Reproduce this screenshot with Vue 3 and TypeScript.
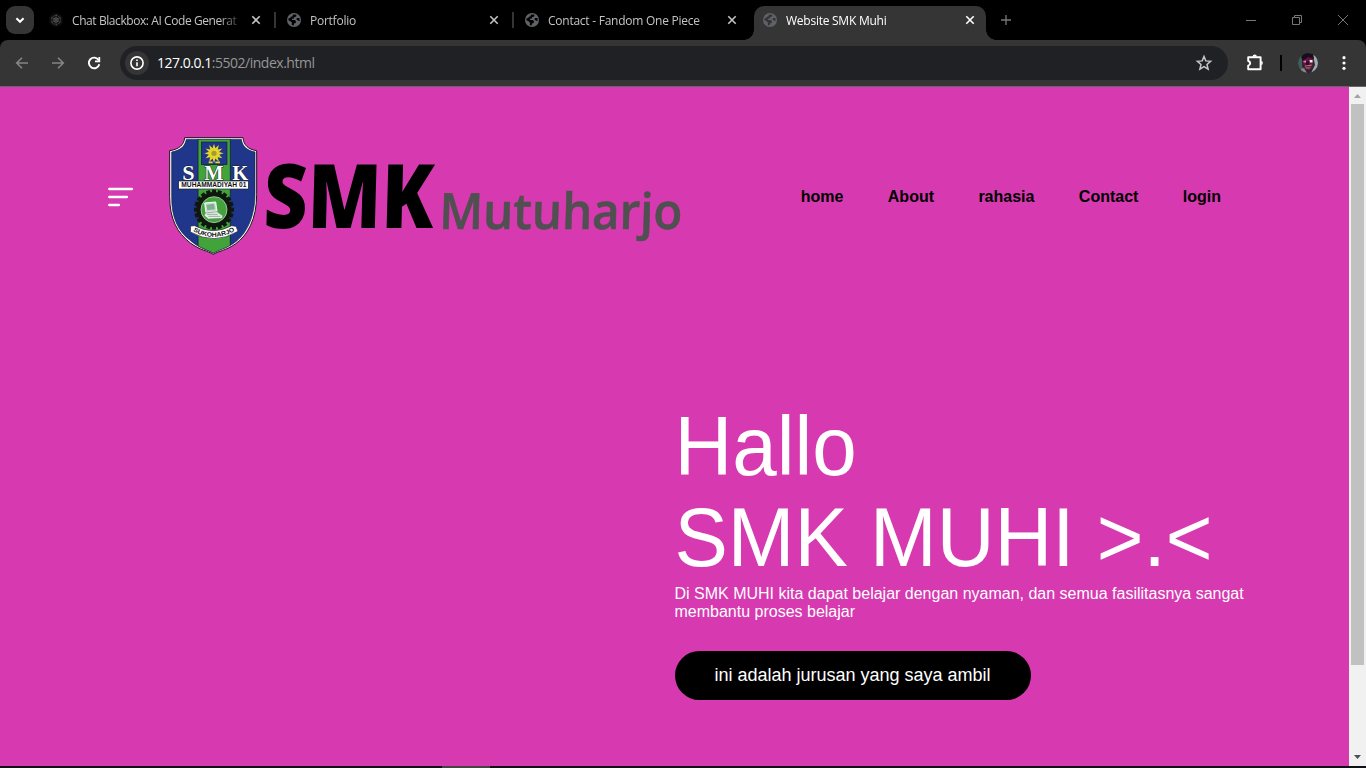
<script setup lang="ts">
interface Tab {
  title: string
  icon: 'blackbox' | 'globe'
  active: boolean
  divider: boolean
}

const tabs: Tab[] = [
  { title: 'Chat Blackbox: AI Code Generat', icon: 'blackbox', active: false, divider: true },
  { title: 'Portfolio', icon: 'globe', active: false, divider: true },
  { title: 'Contact - Fandom One Piece', icon: 'globe', active: false, divider: false },
  { title: 'Website SMK Muhi', icon: 'globe', active: true, divider: false },
]

const links: string[] = ['home', 'About', 'rahasia', 'Contact', 'login']

const teeth: number[] = Array.from({ length: 20 }, (_, i) => i * 18)
const rays: number[] = Array.from({ length: 12 }, (_, i) => i * 30)
</script>

<template>
  <div class="window">
    <header class="tabstrip">
      <button class="tab-search" aria-label="Search tabs">
        <svg width="12" height="12" viewBox="0 0 12 12"><path d="M2.4 4.2 6 7.8 9.6 4.2" fill="none" stroke="#fff" stroke-width="2" /></svg>
      </button>
      <div class="tabs">
        <div v-for="tab in tabs" :key="tab.title" class="tab" :class="[tab.icon, { active: tab.active, divider: tab.divider }]">
          <svg v-if="tab.icon === 'blackbox'" class="favicon" viewBox="0 0 14 14">
            <rect x="0" y="0" width="14" height="14" rx="7" fill="#0d0d0d" />
            <g fill="none" stroke="#777" stroke-width=".7">
              <path d="M7 2 11.3 4.5V9.5L7 12 2.7 9.5V4.5Z" stroke-dasharray="1 1" />
              <path d="M7 2V12M2.7 4.5 11.3 9.5M11.3 4.5 2.7 9.5" stroke-dasharray="1 .7" />
              <circle cx="7" cy="7" r="2.2" />
            </g>
          </svg>
          <svg v-else class="favicon" viewBox="0 0 14 14">
            <circle cx="7" cy="7" r="7" fill="#5f6368" />
            <path class="land" d="M6 1.5 9.5 1.7 9.2 3.6 7.1 4.2 6.9 5.6 5 5.8 4.8 7 7.8 7.1 9 8.3 8.7 9.9 7 10.4 6.7 12.6 4.8 12.1 4.9 9.6 3.4 8.2 1.4 7.2 1.6 5.2 3.4 5 3.7 3.7 5.4 3.4ZM10 4.9 12.4 5 12.7 8 10.7 7.5 9.3 6.2Z" />
          </svg>
          <span class="title">{{ tab.title }}</span>
          <svg class="close" width="10" height="10" viewBox="0 0 10 10"><path d="M1.3 1.3 8.7 8.7M8.7 1.3 1.3 8.7" fill="none" stroke="currentColor" stroke-width="1.6" /></svg>
        </div>
      </div>
      <svg class="new-tab" width="12" height="12" viewBox="0 0 12 12"><path d="M6 1V11M1 6H11" stroke="#777" stroke-width="1.3" /></svg>
      <div class="controls">
        <svg width="12" height="12" viewBox="0 0 12 12"><path d="M1 6.5H11" stroke="#777" /></svg>
        <svg width="12" height="12" viewBox="0 0 12 12"><path d="M1.5 3.5H8.5V10.5H1.5ZM3.5 3.5V1.5H10.5V8.5H8.5" fill="none" stroke="#777" /></svg>
        <svg width="12" height="12" viewBox="0 0 12 12"><path d="M1 1 11 11M11 1 1 11" stroke="#777" stroke-width="1" /></svg>
      </div>
    </header>

    <div class="toolbar">
      <div class="history">
        <svg width="16" height="16" viewBox="0 0 16 16"><path d="M14 8H3M8 2.7 2.7 8 8 13.3" fill="none" stroke="#858585" stroke-width="1.6" /></svg>
        <svg width="16" height="16" viewBox="0 0 16 16"><path d="M2 8H13M8 2.7 13.3 8 8 13.3" fill="none" stroke="#858585" stroke-width="1.6" /></svg>
        <svg width="16" height="16" viewBox="0 0 16 16"><path d="M12.7 5.2A5.3 5.3 0 1 0 13.3 9.2" fill="none" stroke="#fff" stroke-width="1.9" /><path d="M14.2 2V7.2H9V5.6H12.4V2Z" fill="#fff" /></svg>
      </div>
      <div class="omnibox">
        <span class="info">
          <svg width="16" height="16" viewBox="0 0 16 16"><circle cx="8" cy="8" r="6.1" fill="none" stroke="#fff" stroke-width="1.6" /><path d="M8 7.2V11.2M8 4.6V6.1" stroke="#fff" stroke-width="1.6" /></svg>
        </span>
        <span class="url"><b>127.0.0.1</b>:5502/index.html</span>
        <svg class="star" width="18" height="18" viewBox="0 0 18 18"><path d="M9 2.5 10.8 6.9 15.6 7.3 12 10.4 13.1 15.1 9 12.6 4.9 15.1 6 10.4 2.4 7.3 7.2 6.9Z" fill="none" stroke="#c7c7c7" stroke-width="1.5" /></svg>
      </div>
      <svg class="extensions" width="20" height="20" viewBox="0 0 20 20"><path d="M3.7 4.3H15.6V16.2H3.2V12.6C5.8 12 5.8 8.6 3.2 8V4.3Z" fill="none" stroke="#fff" stroke-width="1.9" stroke-linejoin="round" /><path d="M7.5 3.8A2.2 2.2 0 0 1 11.9 3.8ZM16.2 7.8A2.3 2.3 0 0 1 16.2 12.2Z" fill="#fff" /></svg>
      <span class="bar-divider"></span>
      <svg class="avatar" width="20" height="20" viewBox="0 0 20 20">
        <defs><clipPath id="face"><circle cx="10" cy="10" r="10" /></clipPath></defs>
        <g clip-path="url(#face)">
          <rect width="20" height="20" fill="#2a2730" />
          <path d="M0 4 4 2 4 13 7 20H0Z" fill="#3f6058" />
          <path d="M15 2 20 3V20H13L17 12Z" fill="#9caca8" />
          <path d="M4 3 10 1 15 3 15 13 11 18 6 15Z" fill="#65104f" />
          <path d="M3 4 8 0 15 1 16 6 10 4 5 8Z" fill="#170e17" />
          <path d="M5 8 8 7.5 8 9.5 6 9.5Z" fill="#ed79af" />
          <path d="M8 9 11 8 11 13 8 12Z" fill="#2c0c27" />
          <path d="M11.5 7H14.5V9.5H12Z" fill="#fff3cf" />
          <path d="M7 12.5 14 11.5 12 15.5 8 15.5Z" fill="#a87867" />
          <path d="M8 13.8H13" stroke="#351326" />
          <path d="M3 16 6 15 9 20H3Z" fill="#8b8680" />
        </g>
      </svg>
      <svg class="more" width="6" height="16" viewBox="0 0 6 16" fill="#fff"><circle cx="3" cy="2.7" r="1.6" /><circle cx="3" cy="8" r="1.6" /><circle cx="3" cy="13.3" r="1.6" /></svg>
    </div>

    <div class="viewport">
      <main class="page">
        <div class="masthead">
          <svg class="menu" width="26" height="20" viewBox="0 0 26 20"><path d="M1.2 2H24M1.2 10H19M1.2 18H11" stroke="#fff" stroke-width="2.3" stroke-linecap="round" /></svg>
          <svg class="brand" width="540" height="130" viewBox="0 0 540 130">
            <defs>
              <clipPath id="shield"><path d="M79 28H244C247 49 260 61 285 66V190C285 265 257 313 225 337C199 356 174 361 160 370C144 360 118 355 93 333C54 304 34 263 35 198V66C61 61 75 50 79 28Z" /></clipPath>
              <path id="ribbon" d="M99 303Q160 339 226 302" />
            </defs>
            <g transform="scale(.33333)">
              <path d="M74 23H249C251 45 264 58 290 62V194C290 267 263 316 226 342C199 361 174 364 160 373C144 363 119 360 91 339C51 308 29 266 29 199V62C57 58 72 45 74 23Z" fill="#fff" stroke="#171717" stroke-width="3" />
              <g clip-path="url(#shield)">
                <rect x="25" y="22" width="270" height="352" fill="#20368b" />
                <rect x="114" y="22" width="97" height="352" fill="#42a33b" stroke="#162c38" stroke-width="3" />
              </g>
              <path d="M79 28H244C247 49 260 61 285 66V190C285 265 257 313 225 337C199 356 174 361 160 370C144 360 118 355 93 333C54 304 34 263 35 198V66C61 61 75 50 79 28Z" fill="none" stroke="#171b3d" stroke-width="2" />
              <rect x="124" y="36" width="77" height="68" fill="#20368b" stroke="#101d38" stroke-width="2" />
              <g transform="translate(162 70)" fill="#e6d628">
                <path v-for="a in rays" :key="a" d="M-5 -13 0 -29 5 -13Z" :transform="`rotate(${a})`" />
                <circle r="15" /><circle r="8" fill="#a79a30" />
              </g>
              <path d="M146 97H158M166 97H180" stroke="#e6d628" stroke-width="5" />
              <g class="crest-letters" fill="#fff" stroke="#1c1c26" stroke-width="3" paint-order="stroke">
                <text x="67" y="149" textLength="37" lengthAdjust="spacingAndGlyphs">S</text><text x="133" y="149" textLength="58" lengthAdjust="spacingAndGlyphs">M</text><text x="217" y="149" textLength="48" lengthAdjust="spacingAndGlyphs">K</text>
              </g>
              <rect x="56" y="153" width="209" height="24" fill="#fff" stroke="#16202b" stroke-width="2" />
              <text class="crest-name" x="64" y="172" textLength="195" lengthAdjust="spacingAndGlyphs">MUHAMMADIYAH 01</text>
              <g transform="translate(162 239)" fill="#10170f">
                <rect v-for="a in teeth" :key="a" x="-6" y="-60" width="12" height="14" :transform="`rotate(${a})`" />
                <circle r="53" /><circle r="39" fill="#42a33b" stroke="#d8ead3" stroke-width="2" />
              </g>
              <path d="M134 219 167 216 171 244 138 248Z" fill="#c9ddd1" stroke="#f7fff8" stroke-width="3" />
              <path d="M139 224 162 221 165 238 142 241Z" fill="#80ae91" />
              <path d="M136 249 171 245 188 257 187 265 145 267 133 257Z" fill="#e7f0e7" stroke="#6d8d72" stroke-width="2" />
              <path d="M141 253H173M145 259H181" stroke="#6d8d72" stroke-width="2" />
              <path d="M92 288 104 287Q160 317 215 287L228 289 234 304Q164 347 91 306Z" fill="#fff" stroke="#1b2332" stroke-width="2" />
              <text class="crest-city"><textPath href="#ribbon" textLength="132" lengthAdjust="spacingAndGlyphs">SUKOHARJO</textPath></text>
            </g>
            <text class="word-smk" transform="translate(103 98) skewX(-1.5)" textLength="170" lengthAdjust="spacingAndGlyphs">SMK</text>
            <text class="word-mutu" transform="translate(279 99) skewX(-1.5)" textLength="243" lengthAdjust="spacingAndGlyphs">Mutuharjo</text>
          </svg>
          <nav class="links"><a v-for="link in links" :key="link">{{ link }}</a></nav>
        </div>
        <section class="hero">
          <h1>Hallo<br />SMK MUHI &gt;.&lt;</h1>
          <p>Di SMK MUHI kita dapat belajar dengan nyaman, dan semua fasilitasnya sangat membantu proses belajar</p>
          <a class="cta">ini adalah jurusan yang saya ambil</a>
        </section>
      </main>
      <div class="scrollbar">
        <svg width="17" height="17" viewBox="0 0 17 17"><path d="M5 11 8.5 7 12 11Z" fill="#a3a3a3" /></svg>
        <div class="thumb"></div>
        <svg width="17" height="17" viewBox="0 0 17 17"><path d="M5 6 8.5 10 12 6Z" fill="#505050" /></svg>
      </div>
    </div>
    <footer class="taskbar"><span></span></footer>
  </div>
</template>

<style>
body { margin: 0; overflow: hidden; }
</style>

<style scoped>
.window { width: 1366px; height: 768px; display: flex; flex-direction: column; background: #000; overflow: hidden; font-family: "Open Sans", "Noto Sans", sans-serif; }
svg { display: block; flex: none; }
.tabstrip { height: 40px; flex: none; display: flex; align-items: center; background: #000; }
.tab-search { width: 28px; height: 28px; margin: 0 6px; padding: 0; border: 0; border-radius: 9px; background: #353535; display: flex; align-items: center; justify-content: center; }
.tabs { display: flex; gap: 6px; align-self: stretch; padding-top: 6px; }
.tab { position: relative; width: 232px; height: 34px; box-sizing: border-box; padding: 0 11px 6px 9px; display: flex; align-items: center; color: #c4c4c4; font-size: 12px; }
.tab.active { background: #353535; color: #fff; border-radius: 10px 10px 0 0; }
.tab.active::before, .tab.active::after { content: ""; position: absolute; bottom: 0; width: 10px; height: 10px; }
.tab.active::before { right: 100%; background: radial-gradient(circle at 0 0, transparent 9.5px, #353535 10px); }
.tab.active::after { left: 100%; background: radial-gradient(circle at 100% 0, transparent 9.5px, #353535 10px); }
.tab.divider::after { content: ""; position: absolute; left: 234px; top: 6px; width: 2px; height: 16px; background: #353535; }
.favicon { width: 14px; height: 14px; margin-right: 9px; }
.land { fill: #000; }
.active .land { fill: #353535; }
.title { flex: none; width: 168px; margin-right: 6px; padding-top: 2px; line-height: 18px; letter-spacing: -0.25px; white-space: nowrap; overflow: hidden; -webkit-mask-image: linear-gradient(90deg, #000 148px, transparent 172px); mask-image: linear-gradient(90deg, #000 148px, transparent 172px); }
.blackbox .title { letter-spacing: -0.42px; }
.close { margin-left: auto; }
.new-tab { margin-left: 14px; }
.controls { margin-left: auto; margin-right: 17px; display: flex; gap: 34px; }

.toolbar { height: 46px; flex: none; display: flex; align-items: center; box-sizing: border-box; background: #353535; border-radius: 8px 8px 0 0; }
.history { display: flex; gap: 20px; margin-left: 14px; width: 106px; }
.omnibox { width: 1108px; height: 34px; border-radius: 17px; background: #202124; display: flex; align-items: center; box-sizing: border-box; padding: 0 15px 0 5px; }
.info { width: 24px; height: 24px; border-radius: 50%; background: #353535; display: flex; align-items: center; justify-content: center; }
.url { margin-left: 8px; font-size: 14px; line-height: 20px; color: #969696; letter-spacing: -0.48px; }
.url b { font-weight: 400; color: #fff; }
.star { margin-left: auto; }
.extensions { margin-left: 17px; }
.bar-divider { width: 2px; height: 16px; margin: 0 16px 0 15px; background: #000; }
.avatar { margin-right: 23px; }

.viewport { height: 680px; flex: none; display: flex; box-sizing: border-box; border-top: 1px solid #676767; }
.page { width: 1349px; background: #d739b0; font-family: "Liberation Sans", Arial, sans-serif; }
.masthead { height: 130px; padding: 43px 128px 0 108px; display: flex; align-items: center; }
.menu { margin-top: 3px; }
.brand { margin-left: 26px; overflow: visible; }
.links { margin-left: auto; margin-top: 4px; display: flex; gap: 44.4px; font-size: 16px; line-height: 18px; font-weight: 700; color: #000; }
.crest-letters { font: 700 62px "Liberation Serif", serif; }
.crest-name { font: 700 21px "Liberation Sans", sans-serif; fill: #111; }
.crest-city { font: 700 19px "Liberation Sans", sans-serif; fill: #111; }
.word-smk { font: 800 89px "Open Sans", "Noto Sans", sans-serif; fill: #000; }
.word-mutu { font: 600 50px "Open Sans", "Noto Sans", sans-serif; fill: #505050; stroke: #505050; stroke-width: .6px; }
.hero { margin: 141px 0 0 674.5px; width: 580px; color: #fff; }
h1 { margin: 0 0 8px; font-size: 80px; line-height: 88px; font-weight: 400; transform: scaleY(1.04); transform-origin: 0 0; }
p { margin: 0 0 30px; font-size: 16px; line-height: 18px; }
.cta { display: block; width: 356px; height: 49px; box-sizing: border-box; border-radius: 25px; background: #000; font-size: 18px; line-height: 48px; text-align: center; }
.scrollbar { width: 17px; background: #f1f1f1; display: flex; flex-direction: column; }
.thumb { width: 13px; height: 561px; margin: 0 2px auto; background: #c1c1c1; }
.taskbar { height: 2px; flex: none; background: #101017; }
.taskbar span { display: block; width: 48px; height: 2px; margin-left: 442px; background: #444; }
</style>
